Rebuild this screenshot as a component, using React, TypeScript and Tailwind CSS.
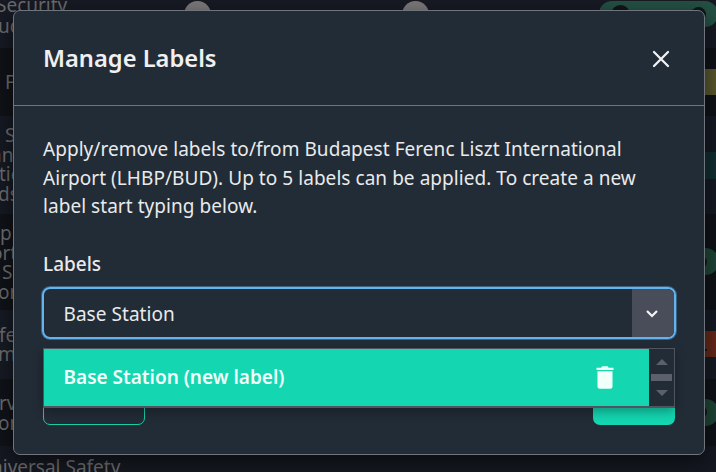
import { ReactNode } from "react";

type Line = { text: string; className: string };

type Row = {
  className: string;
  lines: Line[];
  extra?: ReactNode;
};

function RatingBadge() {
  return (
    <span className="-mr-[3px] mb-px flex size-[27px] items-center rounded-full bg-[#1e4435] pl-[3px]">
      <span className="size-3 rounded-full bg-[#101519]" />
    </span>
  );
}

const rows: Row[] = [
  {
    className: "h-12 items-start",
    lines: [
      { text: "Security", className: "-ml-[4px] -mt-[4px]" },
      { text: "uc", className: "-ml-[2px] mt-px" },
    ],
    extra: (
      <div className="-mr-[2px] flex pt-px">
        <span className="size-[27px] rounded-full bg-[#7b7879]" />
        <span className="ml-[191px] size-[27px] rounded-full bg-[#7b7879]" />
        <span className="ml-[170px] flex h-[26px] w-[119px] items-center justify-between rounded-full bg-[#245043] px-3">
          <span className="size-[19px] rounded-full bg-[#101519]" />
          <span className="size-[15px] rounded-full bg-[#101519]" />
        </span>
      </div>
    ),
  },
  {
    className: "h-[68px] bg-[#101217] items-center",
    lines: [{ text: "F", className: "ml-[5px] mt-px" }],
    extra: <span className="h-[26px] w-12 bg-[#57562d]" />,
  },
  {
    className: "h-[98px] bg-[#151922] items-center",
    lines: [
      { text: "S", className: "ml-[5px]" },
      { text: "an", className: "-ml-[9px]" },
      { text: "tic", className: "-ml-px" },
      { text: "ds", className: "-ml-[2px]" },
    ],
    extra: <span className="h-[27px] w-12 bg-[#112d30]" />,
  },
  {
    className: "h-24 bg-[#0f1217] items-center",
    lines: [
      { text: "p", className: "ml-0 mt-[2px]" },
      { text: "ort", className: "-ml-[9px]" },
      { text: "S", className: "ml-[2px]" },
      { text: "or", className: "-ml-[2px]" },
    ],
    extra: <RatingBadge />,
  },
  {
    className: "h-[69px] bg-[#161a23] items-center",
    lines: [
      { text: "fe", className: "-ml-px mt-px" },
      { text: "m", className: "-ml-[2px]" },
    ],
    extra: (
      <span className="mb-px flex h-[26px] w-12 items-end bg-[#642819] pb-[6px] pl-[37px]">
        <span className="size-[2px] bg-[#101519]" />
      </span>
    ),
  },
  {
    className: "h-[67px] bg-[#0f1217] items-center",
    lines: [
      { text: "rv", className: "-ml-px mt-[2px]" },
      { text: "on", className: "-ml-[2px]" },
    ],
    extra: <RatingBadge />,
  },
  {
    className: "h-[42px] bg-[#151820] items-center",
    lines: [{ text: "niversal Safety", className: "-ml-[9px] mt-[2px]" }],
  },
];

function CloseIcon() {
  return (
    <svg width="18" height="18" viewBox="0 0 18 18" stroke="#f1f1f1" strokeWidth="2.3" strokeLinecap="round">
      <path d="M2 2 16 16M16 2 2 16" />
    </svg>
  );
}

function TrashIcon() {
  return (
    <svg width="18" height="24" viewBox="0 0 18 24" fill="#f1fffb">
      <path d="M.5 2.8h4.6L6.3 1.3h5.2l1.2 1.5h4.8V5H.5z" />
      <path d="M1.5 6.3h15v15a2.5 2.5 0 0 1-2.5 2.5H4a2.5 2.5 0 0 1-2.5-2.5z" />
    </svg>
  );
}

export default function App() {
  return (
    <div className="relative h-[472px] w-[716px] overflow-hidden bg-[#171a23] font-['Noto_Sans',sans-serif]">
      {/* Dimmed table behind the dialog */}
      <div className="flex flex-col">
        {rows.map((row, index) => (
          <div key={index} className={`flex shrink-0 justify-between ${row.className}`}>
            <div className="flex flex-col items-start whitespace-nowrap text-[19px] leading-[19.5px] text-[#6a6a6d]">
              {row.lines.map((line, i) => (
                <span key={i} className={line.className}>
                  {line.text}
                </span>
              ))}
            </div>
            {row.extra}
          </div>
        ))}
      </div>

      {/* Dialog */}
      <div className="absolute left-[13px] top-[10px] flex h-[445px] w-[692px] flex-col rounded-[7px] border border-[#70757d] bg-[#222c37] text-[#e9eaeb] shadow-[0_6px_20px_rgba(0,0,0,0.5)]">
        <header className="flex h-[95px] shrink-0 items-center justify-between border-b border-[#70757d] pl-[29px] pr-[34.5px]">
          <h2 className="pt-[2px] text-[23.7px] font-semibold text-[#f0f0f1]">Manage Labels</h2>
          <button className="pt-px" aria-label="Close">
            <CloseIcon />
          </button>
        </header>

        <div className="px-[29px] pt-[29px]">
          <p className="whitespace-nowrap text-[19px] leading-[28.5px] tracking-[0.05px]">
            Apply/remove labels to/from Budapest Ferenc Liszt International
            <br />
            Airport (LHBP/BUD). Up to 5 labels can be applied. To create a new
            <br />
            label start typing below.
          </p>
          <label className="mt-[29px] block text-[19px] font-medium leading-[29px]">Labels</label>

          {/* Combobox */}
          <div className="-mx-px mt-[8.5px] flex h-[52px] overflow-hidden rounded-lg border-2 border-[#62b3f0] shadow-[0_0_0_1px_rgba(98,179,240,0.4)]">
            <span className="flex flex-1 items-center pl-[19.5px] pt-[2px] text-[19px] tracking-[0.05px]">Base Station</span>
            <button className="flex w-[42px] items-center justify-center bg-[#494d59] pr-[2px] pt-px" aria-label="Open">
              <svg width="14" height="10" viewBox="0 0 14 10" fill="none" stroke="#f4f4f4" strokeWidth="2.2">
                <path d="m2 2 5 5 5-5" />
              </svg>
            </button>
          </div>

          {/* Actions, mostly hidden by the open list */}
          <div className="relative mt-[33px] flex justify-between">
            <div className="h-[53px] w-[102px] rounded-[7px] border border-[#18cda9]" />
            <div className="h-[53px] w-[82px] rounded-[7px] bg-[#14d6b1]" />

            <div className="absolute inset-x-0 -top-[24px] flex h-[60px] border border-b-2 border-[#50545f] bg-[#222c37] shadow-[0_4px_10px_rgba(0,0,0,0.3)]">
              <div className="flex flex-1 items-center justify-between bg-[#14d6b1] pl-[19.5px] pr-[35px]">
                <span className="text-[19px] font-semibold text-[#f1fffb]">Base Station (new label)</span>
                <div className="pb-[2px]">
                  <TrashIcon />
                </div>
              </div>
              <div className="flex w-[25px] flex-col items-center pt-[10px]">
                <svg width="12" height="6" viewBox="0 0 12 6" fill="#5b606a">
                  <path d="M0 6 6 0l6 6z" />
                </svg>
                <div className="mt-[9px] h-[7px] w-[21px] bg-[#5b606a]" />
                <svg className="mt-[9px]" width="12" height="6" viewBox="0 0 12 6" fill="#5b606a">
                  <path d="M0 0h12L6 6z" />
                </svg>
              </div>
            </div>
          </div>
        </div>
      </div>
    </div>
  );
}
